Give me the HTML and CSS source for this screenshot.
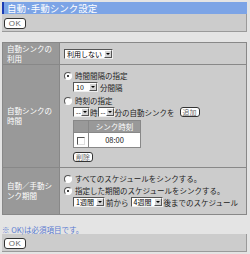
FILE: index.html
```html
<!DOCTYPE html>
<html>
<head>
    <meta charset="utf-8">
    <title>自動･手動シンク設定</title>
    <link rel="stylesheet" href="styles.css">
</head>
<body>
    <div class="title">自動･手動シンク設定</div>
    <div class="toolbar"><span class="btn ok">OK</span></div>

    <table class="form">
        <tr class="row-use">
            <th>自動シンクの<br>利用</th>
            <td><span class="sel sel-use">利用しない<i class="arr"></i></span></td>
        </tr>
        <tr class="row-time">
            <th>自動シンクの<br>時間</th>
            <td>
                <div class="opt"><span class="radio on"></span>時間間隔の指定</div>
                <div class="sub"><span class="sel sel-num">10<i class="arr"></i></span>分間隔</div>
                <div class="opt"><span class="radio"></span>時刻の指定</div>
                <div class="sub">
                    <span class="sel sel-dash">--<i class="arr"></i></span>時<span class="sel sel-dash">--<i class="arr"></i></span>分の自動シンクを
                    <span class="btn add">追加</span>
                </div>
                <table class="times">
                    <tr><th class="chk-col"></th><th>シンク時刻</th></tr>
                    <tr><td class="chk-col"><span class="check"></span></td><td>08:00</td></tr>
                </table>
                <div class="del-line"><span class="btn del">削除</span></div>
            </td>
        </tr>
        <tr class="row-period">
            <th>自動／手動シ<br>ンク期間</th>
            <td>
                <div class="opt"><span class="radio"></span>すべてのスケジュールをシンクする。</div>
                <div class="opt"><span class="radio on"></span>指定した期間のスケジュールをシンクする。</div>
                <div class="sub">
                    <span class="sel sel-week">1週間<i class="arr"></i></span>前から<span class="sel sel-week">4週間<i class="arr"></i></span>後までのスケジュール
                </div>
            </td>
        </tr>
    </table>

    <div class="note">※ OK)は必須項目です。</div>
    <div class="toolbar"><span class="btn ok">OK</span></div>
</body>
</html>
```

FILE: styles.css
```css
body {
    margin: 0;
    padding: 2px 3px 0 2px;
    background-color: #e4e4e4;
    font-family: "Noto Sans CJK JP", sans-serif;
    font-size: 7.5px;
    color: #222;
}

.title {
    height: 12px;
    line-height: 12px;
    padding-left: 3px;
    background-color: #7ca4e6;
    border-left: 2px solid #1c3cb4;
    color: #fff;
    font-size: 9.5px;
}

.toolbar {
    height: 18px;
    padding: 3px 0 0 2px;
    box-sizing: border-box;
    background-color: #cccccc;
    border-right: 1px solid #9a9a9a;
    border-bottom: 1px solid #9a9a9a;
}

.btn {
    display: inline-block;
    box-sizing: border-box;
    border: 1px solid #333;
    border-radius: 3px;
    background-color: #fff;
    color: #666;
    text-align: center;
    vertical-align: middle;
    white-space: nowrap;
}

.btn.ok {
    width: 22px;
    height: 11px;
    line-height: 9px;
    font-family: "Liberation Sans", sans-serif;
    font-size: 8px;
    letter-spacing: 0.5px;
}

.btn.add,
.btn.del {
    height: 10px;
    line-height: 8px;
    padding: 0 2px;
    font-size: 7px;
}

.form {
    margin-top: 10px;
    width: 245px;
    border-collapse: collapse;
}

.form > tbody > tr > th,
.form > tbody > tr > td {
    border: 1px solid #888;
    padding: 0;
}

.form > tbody > tr > th {
    width: 52px;
    padding-left: 4px;
    background-color: #999999;
    color: #fff;
    font-weight: normal;
    text-align: left;
    line-height: 10px;
}

.form > tbody > tr > td {
    background-color: #cccccc;
    padding-left: 4px;
    white-space: nowrap;
}

.row-use { height: 22px; }
.row-time { height: 103px; }
.row-period { height: 47px; }

.row-time > td { padding-top: 3px; padding-bottom: 4px; }
.row-period > td { padding-top: 3px; }

.opt {
    display: flex;
    align-items: center;
    height: 12px;
}

.sub {
    display: flex;
    align-items: center;
    padding-left: 9px;
    height: 11px;
    margin-bottom: 2px;
}

.radio {
    flex-shrink: 0;
    width: 6px;
    height: 6px;
    margin-right: 3px;
    border-radius: 50%;
    border: 1px solid #555;
    border-right-color: #fff;
    border-bottom-color: #fff;
    background-color: #fff;
    position: relative;
}

.radio.on::after {
    content: "";
    position: absolute;
    left: 2px;
    top: 2px;
    width: 2px;
    height: 2px;
    border-radius: 50%;
    background-color: #000;
}

.sel {
    display: inline-flex;
    flex-shrink: 0;
    align-items: center;
    justify-content: space-between;
    box-sizing: border-box;
    height: 10px;
    padding-left: 2px;
    background-color: #fff;
    border: 1px solid #555;
    border-right-color: #eee;
    border-bottom-color: #eee;
    color: #000;
    font-size: 7px;
    white-space: nowrap;
    vertical-align: middle;
}

.sel-use { width: 49px; }
.sel-num { width: 25px; margin-right: 2px; }
.sel-dash { width: 17px; }
.sel-week { width: 32px; margin-right: 1px; }
.sel-week + .sel-week { margin-left: 2px; }

.arr {
    flex-shrink: 0;
    width: 8px;
    height: 8px;
    box-sizing: border-box;
    background-color: #d4d4d4;
    border: 1px solid #fff;
    border-right-color: #555;
    border-bottom-color: #555;
    position: relative;
}

.arr::after {
    content: "";
    position: absolute;
    left: 1px;
    top: 2px;
    border-left: 2px solid transparent;
    border-right: 2px solid transparent;
    border-top: 2px solid #000;
}

.btn.add { margin-left: 5px; }

.times {
    margin-left: 9px;
    width: 68px;
    border-collapse: collapse;
}

.times th,
.times td {
    border: 1px solid #888;
    padding: 0;
    text-align: center;
    font-weight: normal;
}

.times th {
    height: 9px;
    background-color: #999999;
    color: #fff;
}

.times td {
    height: 14px;
    background-color: #fff;
}

.times .chk-col { width: 14px; }

.check {
    display: inline-block;
    width: 6px;
    height: 6px;
    border: 1px solid #555;
    border-right-color: #ddd;
    border-bottom-color: #ddd;
    background-color: #fff;
    vertical-align: middle;
}

.del-line {
    padding-left: 9px;
    margin-top: 3px;
}

.note {
    margin-top: 11px;
    height: 8px;
    line-height: 8px;
    color: #5a7ad0;
    font-size: 7.5px;
}
```
